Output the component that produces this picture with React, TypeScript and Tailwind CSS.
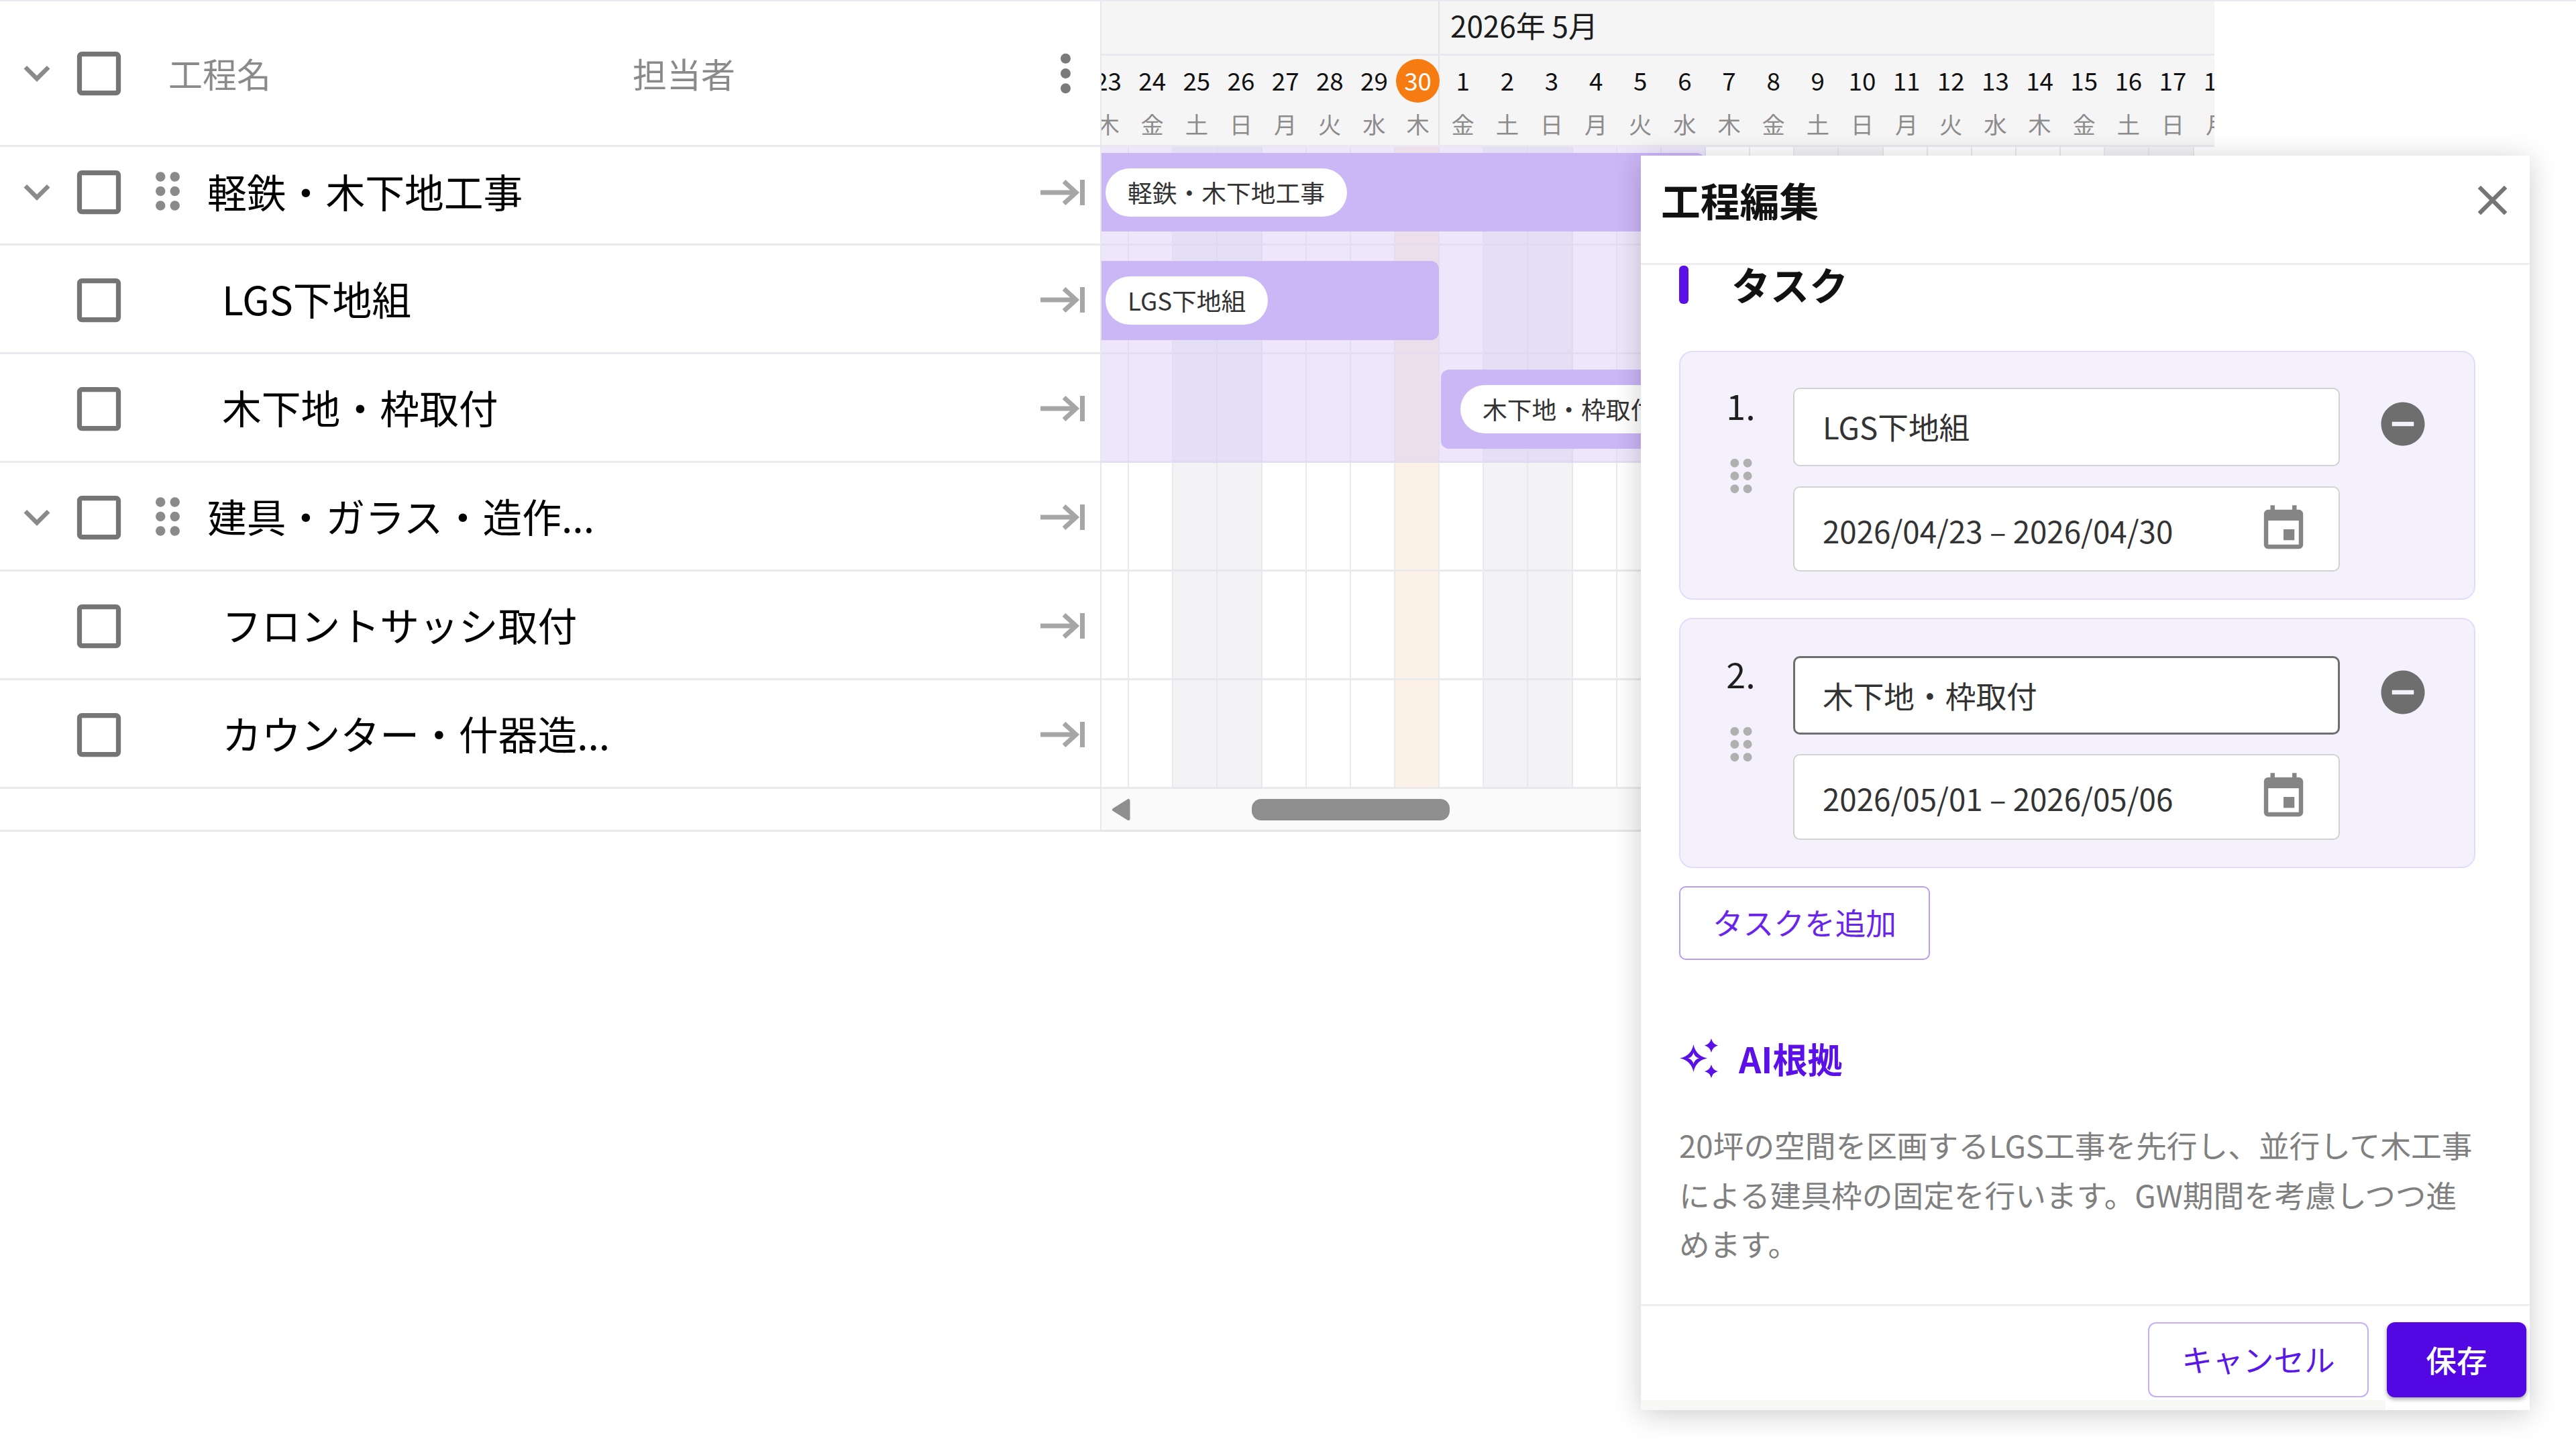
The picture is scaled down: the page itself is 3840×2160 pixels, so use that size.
import React from "react";

const LINE_ICON = "#8a8a8a";

function MuiIcon({ d, size, color, className }: { d: string; size: number; color: string; className?: string }) {
  return (
    <svg viewBox="0 0 24 24" width={size} height={size} fill={color} className={className}>
      <path d={d} />
    </svg>
  );
}

const P = {
  expand: "M16.59 8.59 12 13.17 7.41 8.59 6 10l6 6 6-6z",
  box: "M19 5v14H5V5h14m0-2H5c-1.1 0-2 .9-2 2v14c0 1.1.9 2 2 2h14c1.1 0 2-.9 2-2V5c0-1.1-.9-2-2-2z",
  drag: "M11 18c0 1.1-.9 2-2 2s-2-.9-2-2 .9-2 2-2 2 .9 2 2zm-2-8c-1.1 0-2 .9-2 2s.9 2 2 2 2-.9 2-2-.9-2-2-2zm0-6c-1.1 0-2 .9-2 2s.9 2 2 2 2-.9 2-2-.9-2-2-2zm6 4c1.1 0 2-.9 2-2s-.9-2-2-2-2 .9-2 2 .9 2 2 2zm0 2c-1.1 0-2 .9-2 2s.9 2 2 2 2-.9 2-2-.9-2-2-2zm0 6c-1.1 0-2 .9-2 2s.9 2 2 2 2-.9 2-2-.9-2-2-2z",
  more: "M12 8c1.1 0 2-.9 2-2s-.9-2-2-2-2 .9-2 2 .9 2 2 2zm0 2c-1.1 0-2 .9-2 2s.9 2 2 2 2-.9 2-2-.9-2-2-2zm0 6c-1.1 0-2 .9-2 2s.9 2 2 2 2-.9 2-2-.9-2-2-2z",
  close: "M19 6.41 17.59 5 12 10.59 6.41 5 5 6.41 10.59 12 5 17.59 6.41 19 12 13.41 17.59 19 19 17.59 13.41 12z",
  event: "M17 12h-5v5h5v-5zM16 1v2H8V1H6v2H5c-1.11 0-1.99.9-1.99 2L3 19c0 1.1.89 2 2 2h14c1.1 0 2-.9 2-2V5c0-1.1-.9-2-2-2h-1V1h-2zm3 18H5V8h14v11z",
  remove: "M12 2C6.48 2 2 6.48 2 12s4.48 10 10 10 10-4.48 10-10S17.52 2 12 2zm5 11H7v-2h10v2z",
};

function ArrowToLine() {
  return (
    <svg viewBox="0 0 66 38" width={66} height={38} fill="none" stroke="#a6a6a6" strokeWidth={7}>
      <path d="M0 19h52" />
      <path d="M35 2.5l18 16.5-18 16.5" />
      <path d="M62.5 0v38" />
    </svg>
  );
}

function Sparkle() {
  return (
    <svg viewBox="0 0 60 60" width={60} height={60} fill="#5b10e8">
      <path
        fillRule="evenodd"
        d="M21.5 9Q25 26 42 29.5Q25 33 21.5 50Q18 33 1 29.5Q18 26 21.5 9ZM21.5 21Q20 28 13 29.5Q20 31 21.5 38Q23 31 30 29.5Q23 28 21.5 21Z"
      />
      <path d="M48 0Q50 8.5 58 10.5Q50 12.5 48 21Q46 12.5 38 10.5Q46 8.5 48 0Z" />
      <path d="M48 39Q50 47 58 49Q50 51 48 59Q46 51 38 49Q46 47 48 39Z" />
    </svg>
  );
}

type Day = { n: number; w: string; kind: "plain" | "weekend" | "today"; tinted: boolean };
const weekNames = ["木", "金", "土", "日", "月", "火", "水"];
const dayNums = [23, 24, 25, 26, 27, 28, 29, 30, 1, 2, 3, 4, 5, 6, 7, 8, 9, 10, 11, 12, 13, 14, 15, 16, 17, 18];
const days: Day[] = dayNums.map((n, i) => {
  const w = weekNames[i % 7];
  return {
    n,
    w,
    kind: n === 30 ? "today" : w === "土" || w === "日" ? "weekend" : "plain",
    tinted: i <= 13,
  };
});

function cellClass(d: Day, tintedRow: boolean) {
  if (tintedRow && d.tinted) {
    if (d.kind === "today") return "bg-[#ecdeeb] border-[#e6deef]";
    if (d.kind === "weekend") return "bg-[#e5dff5] border-[#e0daf1]";
    return "bg-[#eee7fc] border-[#e4def3]";
  }
  if (d.kind === "today") return "bg-[#fcf1e7] border-[#ebe9ea]";
  if (d.kind === "weekend") return "bg-[#f3f3f6] border-[#e8e8ec]";
  return "bg-white border-[#e9e9ee]";
}

function Cells({ tinted }: { tinted: boolean }) {
  return (
    <div className="flex h-full ml-[-25px]">
      {days.map((d, i) => (
        <div key={i} className={"w-[66.15px] shrink-0 h-full border-r-2 border-b-[3px] " + cellClass(d, tinted)} />
      ))}
    </div>
  );
}

function Pill({ text, ml }: { text: string; ml: string }) {
  return (
    <div className={"h-[72px] px-[33px] rounded-full bg-white flex items-center text-[36.75px] text-[#333333] whitespace-nowrap " + ml}>
      {text}
    </div>
  );
}

function TableRow({ name, parent, h }: { name: string; parent: boolean; h: string }) {
  return (
    <div className={"flex items-center border-b-[3px] border-[#e9e9ee] " + h}>
      <div className="w-[104px] pl-[16px] shrink-0 mt-[2px]">
        {parent && <MuiIcon d={P.expand} size={78} color={LINE_ICON} />}
      </div>
      <MuiIcon d={P.box} size={87} color="#757575" className="shrink-0 mt-[3px]" />
      {parent ? (
        <div className="w-[118px] shrink-0 pl-[16px]">
          <MuiIcon d={P.drag} size={86} color="#8a8a8a" />
        </div>
      ) : (
        <div className="w-[140px] shrink-0" />
      )}
      <div className="text-[58.8px] text-black whitespace-nowrap">{name}</div>
      <div className="ml-auto mr-[23px] mt-[3px]">
        <ArrowToLine />
      </div>
    </div>
  );
}

function TaskCard({
  num,
  name,
  range,
  h,
  pt,
  focus,
  gap,
  dateH,
}: {
  num: string;
  name: string;
  range: string;
  h: string;
  pt: string;
  focus?: boolean;
  gap: string;
  dateH: string;
}) {
  return (
    <div className={"flex rounded-[20px] border-2 border-[#e4dbfb] bg-[#f4f1fd] " + h + " " + pt}>
      <div className="w-[168px] shrink-0 pl-[12px] flex flex-col items-center">
        <div className="h-[60px] flex items-center text-[52px] text-[#1f1f1f] pb-[8px]">{num}</div>
        <MuiIcon d={P.drag} size={77} color="#b0b0b0" className="mt-[33px]" />
      </div>
      <div className={"w-[815px] shrink-0 flex flex-col " + gap}>
        <div
          className={
            "h-[117px] rounded-[10px] bg-white flex items-center text-[45.7px] text-[#333333] " +
            (focus ? "border-[3px] border-[#6e6e6e] pl-[41px]" : "border-2 border-[#d2d2d2] pl-[42px] pb-[2px]")
          }
        >
          {name}
        </div>
        <div
          className={
            "rounded-[10px] bg-white border-2 border-[#d2d2d2] flex items-center justify-between pl-[42px] pr-[43px] " + dateH
          }
        >
          <span className="text-[45.7px] text-[#333333] pt-[3px]">{range}</span>
          <MuiIcon d={P.event} size={78} color="#858585" />
        </div>
      </div>
      <div className="ml-[55px] mt-[15px]">
        <MuiIcon d={P.remove} size={78} color="#6e6e6e" />
      </div>
    </div>
  );
}

export default function App() {
  return (
    <div
      className="relative w-[3840px] h-[2160px] bg-white overflow-hidden"
      style={{ fontFamily: '"Noto Sans CJK JP", "Noto Sans", sans-serif' }}
    >
      <div className="flex items-start border-t-2 border-[#e8e8ee]">
        {/* left table */}
        <div className="w-[1640px] shrink-0">
          <div className="h-[217px] flex items-center border-b-[3px] border-[#e9e9ee] relative">
            <div className="w-[104px] pl-[16px] shrink-0">
              <MuiIcon d={P.expand} size={78} color={LINE_ICON} />
            </div>
            <MuiIcon d={P.box} size={87} color="#757575" className="shrink-0" />
            <div className="ml-[60px] w-[692px] text-[51px] text-[#8a8a8a]">工程名</div>
            <div className="text-[51px] text-[#8a8a8a]">担当者</div>
            <div className="ml-auto mr-[7px]">
              <MuiIcon d={P.more} size={89} color="#7a7a7a" />
            </div>
          </div>
          <TableRow name="軽鉄・木下地工事" parent h="h-[147px] pb-[12px]" />
          <TableRow name="LGS下地組" parent={false} h="h-[162px]" />
          <TableRow name="木下地・枠取付" parent={false} h="h-[162px]" />
          <TableRow name="建具・ガラス・造作..." parent h="h-[162px]" />
          <TableRow name="フロントサッシ取付" parent={false} h="h-[162px]" />
          <TableRow name="カウンター・什器造..." parent={false} h="h-[162px]" />
          <div className="h-[64px] border-b-[3px] border-[#e9e9ee]" />
        </div>

        {/* gantt */}
        <div className="w-[1661px] shrink-0 border-l-2 border-[#e6e6ec] overflow-hidden">
          <div className="h-[81px] flex bg-[#f5f5f5] border-b-[3px] border-[#e8e8ee]">
            <div className="w-[504px] shrink-0 border-r-2 border-[#e4e4e8]" />
            <div className="pl-[16px] pb-[9px] flex items-center text-[44px] text-[#1c1c1c] whitespace-nowrap">2026年 5月</div>
          </div>
          <div className="h-[136px] flex bg-[#f5f5f5] border-b-[3px] border-[#e8e8ee] ml-[-25px]">
            {days.map((d, i) => (
              <div
                key={i}
                className={"w-[66.15px] shrink-0 flex flex-col items-center pl-[3px] " + (d.n === 30 ? "border-r-2 border-[#e4e4e8]" : "")}
              >
                <div className="h-[74px] flex items-center justify-center">
                  {d.n === 30 ? (
                    <div className="w-[65px] h-[65px] rounded-full bg-[#f67c12] text-white text-[36.75px] flex items-center justify-center">
                      30
                    </div>
                  ) : (
                    <span className="text-[36.75px] text-[#111111]">{d.n}</span>
                  )}
                </div>
                <div className="h-[56px] flex items-center text-[34.3px] text-[#8c8c8c]">{d.w}</div>
              </div>
            ))}
          </div>

          <div className="relative h-[147px]">
            <Cells tinted />
            <div className="absolute left-0 top-[9px] h-[117px] w-[899px] bg-[#cbb6f6] rounded-r-[12px] flex items-center">
              <Pill text="軽鉄・木下地工事" ml="ml-[6px]" />
            </div>
          </div>
          <div className="relative h-[162px]">
            <Cells tinted />
            <div className="absolute left-0 top-[23px] h-[118px] w-[503px] bg-[#cbb6f6] rounded-r-[12px] flex items-center">
              <Pill text="LGS下地組" ml="ml-[6px]" />
            </div>
          </div>
          <div className="relative h-[162px]">
            <Cells tinted />
            <div className="absolute left-[506px] top-[23px] h-[118px] w-[395px] bg-[#cbb6f6] rounded-[12px] flex items-center">
              <Pill text="木下地・枠取付" ml="ml-[29px]" />
            </div>
          </div>
          <div className="h-[162px]">
            <Cells tinted={false} />
          </div>
          <div className="h-[162px]">
            <Cells tinted={false} />
          </div>
          <div className="h-[162px]">
            <Cells tinted={false} />
          </div>
          <div className="h-[64px] bg-[#fafafa] border-b-[3px] border-[#e6e6ea] flex items-center pl-[15px]">
            <svg viewBox="0 0 28 34" width={28} height={34} fill="#8e8e8e" stroke="#8e8e8e" strokeWidth={5} strokeLinejoin="round">
              <path d="M25 3.5v27L3.5 17z" />
            </svg>
            <div className="ml-[181px] w-[295px] h-[32px] rounded-[14px] bg-[#8e8e8e]" />
          </div>
        </div>
      </div>

      {/* edit panel */}
      <div className="absolute left-[2446px] top-[232px] w-[1325px] h-[1870px] bg-white flex flex-col shadow-[0_6px_40px_rgba(0,0,0,0.2)]">
        <div className="h-[163px] shrink-0 border-b-[3px] border-[#eeeeef] flex items-center justify-between pl-[30px] pr-[18px] pb-[28px]">
          <div className="text-[58.8px] font-bold text-[#111111]">工程編集</div>
          <MuiIcon d={P.close} size={75} color="#757575" />
        </div>
        <div className="flex-1 min-h-0 overflow-hidden pl-[57px] pr-[81px]">
          <div className="flex items-center h-[57px] mt-[1px]">
            <div className="w-[14px] h-[57px] rounded-[6px] bg-[#5b10e8]" />
            <div className="ml-[64px] pb-[4px] text-[58px] font-bold text-[#111111] leading-none">タスク</div>
          </div>
          <div className="mt-[70px] flex flex-col gap-[27px]">
            <TaskCard num="1." name="LGS下地組" range="2026/04/23 – 2026/04/30" h="h-[371px]" pt="pt-[53px]" gap="gap-[30px]" dateH="h-[127px]" />
            <TaskCard num="2." name="木下地・枠取付" range="2026/05/01 – 2026/05/06" h="h-[373px]" pt="pt-[55px]" focus gap="gap-[29px]" dateH="h-[128px]" />
          </div>
          <div className="mt-[27px] w-[374px] h-[110px] pb-[3px] rounded-[10px] border-2 border-[#b99ef8] flex items-center justify-center text-[45.7px] text-[#6a25ec]">
            タスクを追加
          </div>
          <div className="mt-[117px] flex items-center h-[60px]">
            <Sparkle />
            <div className="ml-[29px] text-[52px] font-bold text-[#5b10e8]">AI根拠</div>
          </div>
          <p className="mt-[62px] text-[45.7px] leading-[73.5px] text-[#808080]">
            20坪の空間を区画するLGS工事を先行し、並行して木工事による建具枠の固定を行います。GW期間を考慮しつつ進めます。
          </p>
        </div>
        <div className="shrink-0 border-t-[3px] border-[#eeeeef] h-[158px] flex flex-col">
          <div className="flex justify-end gap-[27px] pr-[5px] pt-[24px]">
            <div className="w-[329px] h-[112px] pb-[3px] rounded-[12px] border-2 border-[#c7aefa] flex items-center justify-center text-[45.7px] text-[#5a18e8]">
              キャンセル
            </div>
            <div className="w-[208px] h-[112px] pb-[2px] rounded-[12px] bg-[#5308e3] shadow-[0_3px_6px_rgba(0,0,0,0.35)] flex items-center justify-center text-[45.7px] font-medium text-white">
              保存
            </div>
          </div>
          <div className="mt-auto w-[1110px] h-[15px] bg-[#f7f8f6]" />
        </div>
      </div>
    </div>
  );
}
